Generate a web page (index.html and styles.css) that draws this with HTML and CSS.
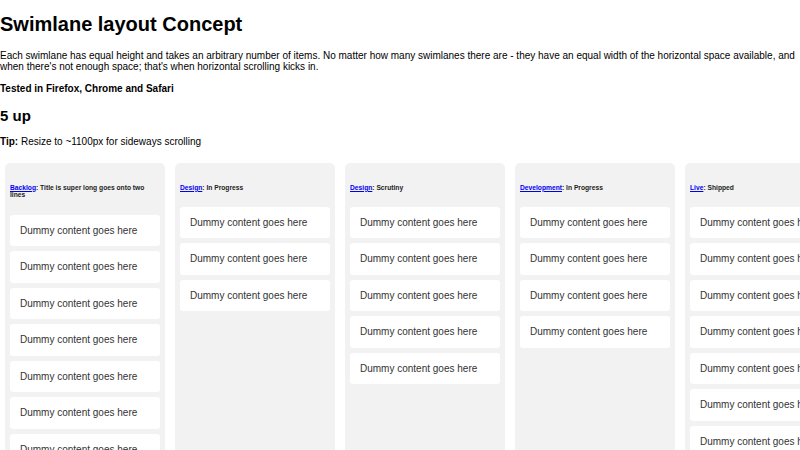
FILE: index.html
```html
<!DOCTYPE html>
<html lang="en">
<head>
    <meta charset="UTF-8">
    <meta name="viewport" content="width=device-width, initial-scale=1.0">
    <title>Swimlane layout Concept</title>
    <link rel="stylesheet" href="styles.css">
</head>
<body>
    <!-- Intro -->
    <h1>Swimlane layout Concept</h1>
    <p>Each swimlane has equal height and takes an arbitrary number of items. No matter how many swimlanes there are - they have an equal width of the horizontal space available, and when there's not enough space; that's when horizontal scrolling kicks in.</p>
    <p><strong>Tested in Firefox, Chrome and Safari</strong></p>

    <h2>5 up</h2>
    <p><strong>Tip:</strong> Resize to ~1100px for sideways scrolling</p>

    <!-- Swimlanes -->
    <div class="swimlanes">
        <div class="lane">
            <h6 class="lane-title"><a href="#">Backlog</a>: Title is super long goes onto two lines</h6>
            <div class="card">Dummy content goes here</div>
            <div class="card">Dummy content goes here</div>
            <div class="card">Dummy content goes here</div>
            <div class="card">Dummy content goes here</div>
            <div class="card">Dummy content goes here</div>
            <div class="card">Dummy content goes here</div>
            <div class="card">Dummy content goes here</div>
            <div class="card">Dummy content goes here</div>
        </div>
        <div class="lane">
            <h6 class="lane-title"><a href="#">Design</a>: In Progress</h6>
            <div class="card">Dummy content goes here</div>
            <div class="card">Dummy content goes here</div>
            <div class="card">Dummy content goes here</div>
        </div>
        <div class="lane">
            <h6 class="lane-title"><a href="#">Design</a>: Scrutiny</h6>
            <div class="card">Dummy content goes here</div>
            <div class="card">Dummy content goes here</div>
            <div class="card">Dummy content goes here</div>
            <div class="card">Dummy content goes here</div>
            <div class="card">Dummy content goes here</div>
        </div>
        <div class="lane">
            <h6 class="lane-title"><a href="#">Development</a>: In Progress</h6>
            <div class="card">Dummy content goes here</div>
            <div class="card">Dummy content goes here</div>
            <div class="card">Dummy content goes here</div>
            <div class="card">Dummy content goes here</div>
        </div>
        <div class="lane">
            <h6 class="lane-title"><a href="#">Live</a>: Shipped</h6>
            <div class="card">Dummy content goes here</div>
            <div class="card">Dummy content goes here</div>
            <div class="card">Dummy content goes here</div>
            <div class="card">Dummy content goes here</div>
            <div class="card">Dummy content goes here</div>
            <div class="card">Dummy content goes here</div>
            <div class="card">Dummy content goes here</div>
            <div class="card">Dummy content goes here</div>
        </div>
    </div>
</body>
</html>
```

FILE: styles.css
```css
/* General Styling */
html {
    overflow: hidden;
}
body {
    margin: 0;
    font-family: 'Liberation Sans', Arial, sans-serif;
    font-size: 10px;
    line-height: 11.5px;
    color: #000;
}
h1 {
    font-size: 20px;
    line-height: 23px;
    margin: 13.4px 0;
}
h2 {
    font-size: 15px;
    line-height: 17.25px;
    margin: 12.45px 0;
}
p {
    margin: 10px 0;
}

/* Swimlanes */
.swimlanes {
    display: flex;
    gap: 10px;
    padding: 5px;
    align-items: stretch;
}
.lane {
    flex: 0 0 160px;
    box-sizing: border-box;
    padding: 5px;
    background: #f2f2f2;
    border-radius: 5px;
}
.lane-title {
    font-size: 6.7px;
    line-height: 7.7px;
    margin: 15.6px 0;
    color: #222;
}
.lane-title a {
    color: #0000ee;
}

/* Cards */
.card {
    padding: 10px;
    margin-bottom: 5px;
    background: #ffffff;
    border-radius: 3px;
    color: #333;
}
```
